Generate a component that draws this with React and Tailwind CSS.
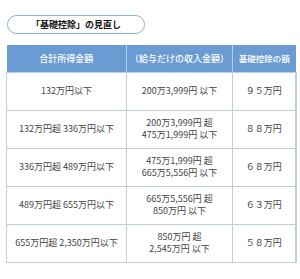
const rows = [
  { income: ["132万円以下"], salary: ["200万3,999円 以下"], amount: "９５万円" },
  { income: ["132万円超 336万円以下"], salary: ["200万3,999円 超", "475万1,999円 以下"], amount: "８８万円" },
  { income: ["336万円超 489万円以下"], salary: ["475万1,999円 超", "665万5,556円 以下"], amount: "６８万円" },
  { income: ["489万円超 655万円以下"], salary: ["665万5,556円 超", "850万円 以下"], amount: "６３万円" },
  { income: ["655万円超 2,350万円以下"], salary: ["850万円 超", "2,545万円 以下"], amount: "５８万円" },
];

const Lines = ({ lines }) => (
  <div className="flex flex-col items-center leading-[12.5px]">
    {lines.map((l) => (
      <span key={l}>{l}</span>
    ))}
  </div>
);

export default function App() {
  return (
    <div
      className="w-[300px] h-[279px] bg-white overflow-hidden pt-[15px]"
      style={{ fontFamily: '"Noto Sans CJK JP", "Noto Sans", sans-serif' }}
    >
      <div className="ml-[7px] w-[138px] h-[19px] rounded-full border-[1.5px] border-[#8db3e2] flex items-center justify-center text-[9px] font-bold text-[#111]">
        「基礎控除」の見直し
      </div>

      <table className="mt-[11px] ml-[6px] w-[289px] table-fixed border-collapse text-[9px] text-[#444]">
        <colgroup>
          <col className="w-[120px]" />
          <col className="w-[106px]" />
          <col className="w-[63px]" />
        </colgroup>
        <thead>
          <tr className="h-[27px] bg-[#6a9bd3] text-white">
            <th className="font-medium border-r border-[#b4cdea] px-0">合計所得金額</th>
            <th className="font-medium border-r border-[#b4cdea] px-0 whitespace-nowrap">（給与だけの収入金額）</th>
            <th className="font-medium px-0 whitespace-nowrap text-[8.5px]">基礎控除の額</th>
          </tr>
        </thead>
        <tbody>
          {rows.map((r) => (
            <tr key={r.amount} className="h-[38px]">
              <td className="border border-[#bccfd5] text-center whitespace-nowrap">
                <Lines lines={r.income} />
              </td>
              <td className="border border-[#bccfd5] text-center whitespace-nowrap">
                <Lines lines={r.salary} />
              </td>
              <td className="border border-[#bccfd5] border-r-2 text-center whitespace-nowrap">
                {r.amount}
              </td>
            </tr>
          ))}
        </tbody>
      </table>
    </div>
  );
}
